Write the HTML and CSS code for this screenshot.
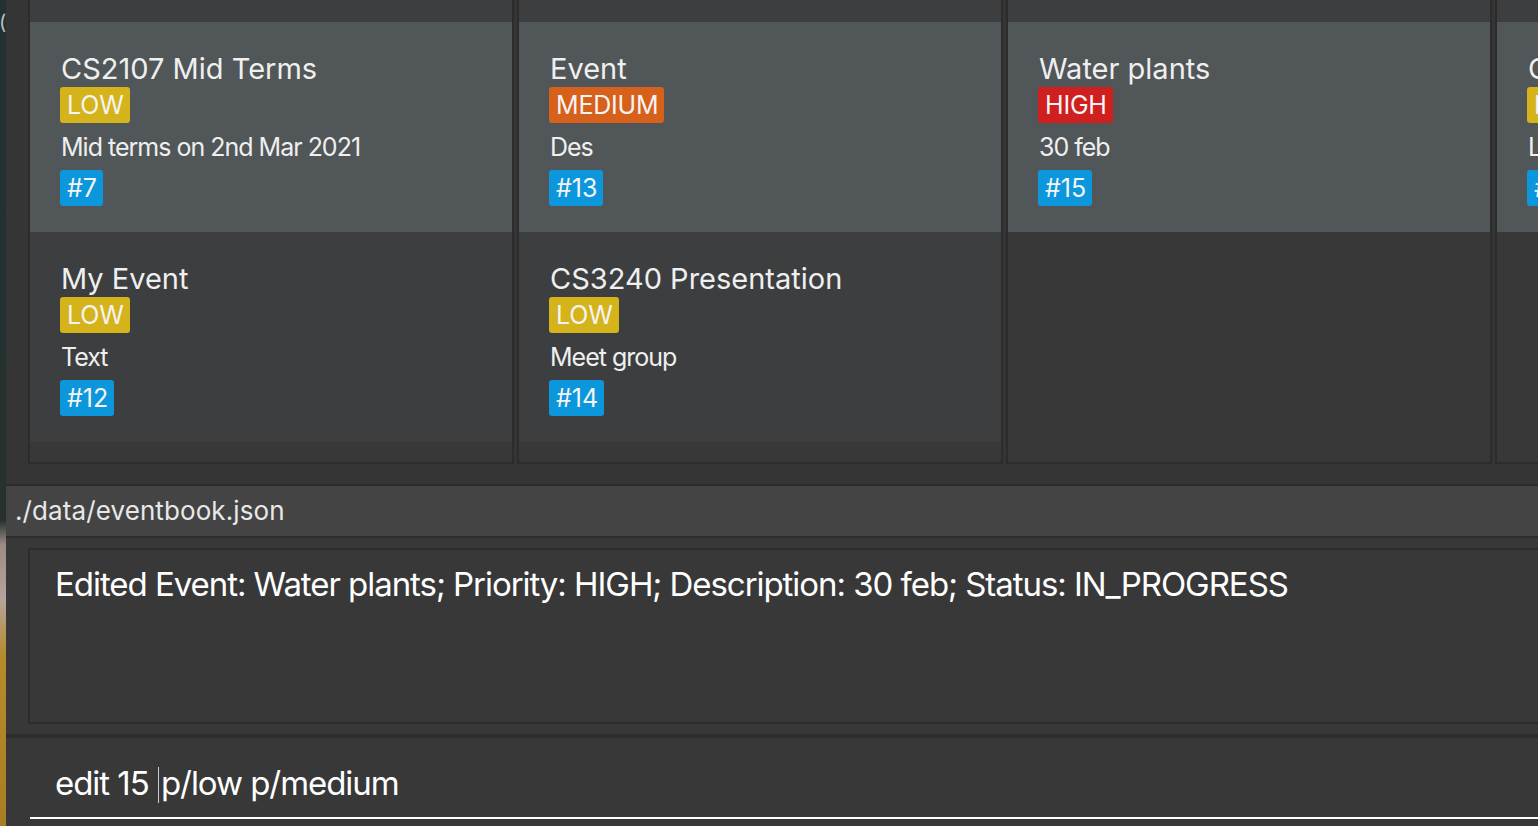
FILE: index.html
```html
<!DOCTYPE html>
<html>
<head>
<meta charset="utf-8">
<link rel="stylesheet" href="styles.css">
</head>
<body>
<div class="screen">
  <div class="desktop-strip"><span class="paren">(</span></div>
  <div class="window">
    <section class="board">
      <div class="column">
        <div class="col-top"></div>
        <div class="card odd">
          <div class="title">CS2107 Mid Terms</div>
          <div class="row"><span class="badge low">LOW</span></div>
          <div class="desc">Mid terms on 2nd Mar 2021</div>
          <div class="row"><span class="tag">#7</span></div>
        </div>
        <div class="card even">
          <div class="title">My Event</div>
          <div class="row"><span class="badge low">LOW</span></div>
          <div class="desc">Text</div>
          <div class="row"><span class="tag">#12</span></div>
        </div>
      </div>
      <div class="column">
        <div class="col-top"></div>
        <div class="card odd">
          <div class="title">Event</div>
          <div class="row"><span class="badge medium">MEDIUM</span></div>
          <div class="desc">Des</div>
          <div class="row"><span class="tag">#13</span></div>
        </div>
        <div class="card even">
          <div class="title">CS3240 Presentation</div>
          <div class="row"><span class="badge low">LOW</span></div>
          <div class="desc">Meet group</div>
          <div class="row"><span class="tag">#14</span></div>
        </div>
      </div>
      <div class="column">
        <div class="col-top"></div>
        <div class="card odd">
          <div class="title">Water plants</div>
          <div class="row"><span class="badge high">HIGH</span></div>
          <div class="desc">30 feb</div>
          <div class="row"><span class="tag">#15</span></div>
        </div>
      </div>
      <div class="column">
        <div class="col-top"></div>
        <div class="card odd">
          <div class="title">CS2103 Lecture</div>
          <div class="row"><span class="badge low">LOW</span></div>
          <div class="desc">Lecture notes</div>
          <div class="row"><span class="tag">#16</span></div>
        </div>
      </div>
    </section>
    <div class="status-bar">./data/eventbook.json</div>
    <div class="result-pane">
      <div class="result-box">Edited Event: Water plants; Priority: HIGH; Description: 30 feb; Status: IN_PROGRESS</div>
    </div>
    <div class="command-pane">
      <div class="command-field">edit 15 <span class="caret"></span>p/low p/medium</div>
    </div>
  </div>
</div>
</body>
</html>
```

FILE: styles.css
```css
html, body {
  margin: 0;
  padding: 0;
  background: #383838;
  overflow: hidden;
}

.screen {
  width: 1538px;
  height: 826px;
  display: flex;
  overflow: hidden;
  font-family: Inter, "Noto Sans", sans-serif;
}

.desktop-strip {
  flex: 0 0 6px;
  height: 826px;
  background: linear-gradient(to bottom, #243032 0px, #26312f 520px, #9c8c86 545px, #b7a39b 600px, #b48c2c 655px, #a77f22 826px);
  position: relative;
  overflow: hidden;
}

.paren {
  position: absolute;
  left: -1px;
  top: 10px;
  color: #b9c0c0;
  font-size: 20px;
  line-height: 24px;
}

.window {
  flex: 0 0 2000px;
  display: flex;
  flex-direction: column;
  background: #383838;
}

.board {
  display: flex;
  gap: 3px;
  padding-left: 22px;
  height: 484px;
  background: #353535;
  box-sizing: border-box;
}

.column {
  width: 486px;
  height: 464px;
  box-sizing: border-box;
  border: 2px solid #2c2c2c;
  border-top: none;
  background: #383838;
  display: flex;
  flex-direction: column;
}

.col-top {
  height: 22px;
  background: #3c3e3f;
}

.card {
  height: 210px;
  box-sizing: border-box;
  padding: 30px 0 0 30px;
  color: #efefef;
  display: flex;
  flex-direction: column;
  align-items: flex-start;
}

.card.odd { background: #515658; }
.card.even { background: #3c3e3f; }

.title {
  font-size: 29px;
  line-height: 34px;
  letter-spacing: 0px;
  padding-left: 1px;
  white-space: nowrap;
}

.row {
  display: flex;
}

.badge {
  margin-top: 1px;
  height: 36px;
  line-height: 36px;
  font-size: 25px;
  padding: 0 6px 0 7px;
  border-radius: 3px;
  color: #f4f4f4;
  letter-spacing: -0.2px;
}

.badge.low { background: #d4b31b; }
.badge.medium { background: #d7601a; }
.badge.high { background: #cf1f1f; }

.desc {
  margin-top: 9px;
  padding-left: 1px;
  font-size: 25px;
  line-height: 30px;
  letter-spacing: -1.0px;
  white-space: nowrap;
}

.tag {
  margin-top: 8px;
  height: 36px;
  line-height: 36px;
  font-size: 25px;
  padding: 0 6px 0 7px;
  border-radius: 3px;
  background: #0c97dc;
  color: #f4f4f4;
  letter-spacing: 0px;
}

.status-bar {
  height: 54px;
  box-sizing: border-box;
  border-top: 2px solid #2c2c2c;
  border-bottom: 2px solid #2c2c2c;
  background: #444444;
  padding: 1px 0 0 9px;
  font-size: 26px;
  line-height: 48px;
  color: #e8e8e8;
  letter-spacing: 0.1px;
}

.result-pane {
  height: 196px;
  box-sizing: border-box;
  padding: 10px 0 10px 22px;
  background: #383838;
}

.result-box {
  height: 176px;
  box-sizing: border-box;
  border: 2px solid #2c2c2c;
  padding: 14px 0 0 25px;
  font-size: 33px;
  line-height: 40px;
  color: #ffffff;
  letter-spacing: -1.05px;
  white-space: nowrap;
}

.command-pane {
  flex: 1;
  border-top: 4px solid #2c2c2c;
  background: #383838;
  padding-left: 24px;
}

.command-field {
  height: 81px;
  box-sizing: border-box;
  padding: 25px 0 0 25px;
  border-bottom: 2px solid #ffffff;
  font-size: 33px;
  line-height: 40px;
  color: #ffffff;
  letter-spacing: -1.05px;
  white-space: pre;
}

.caret {
  display: inline-block;
  width: 0;
  height: 36px;
  border-left: 1px solid #cfcfcf;
  vertical-align: -8px;
  margin-left: 1px;
  margin-right: 2px;
}
```
